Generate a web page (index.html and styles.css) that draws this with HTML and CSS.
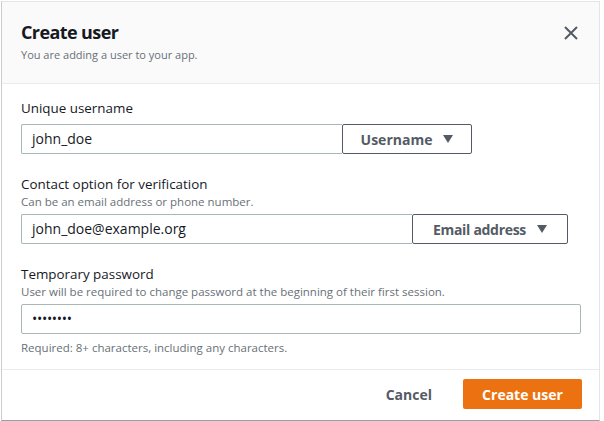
FILE: index.html
```html
<!DOCTYPE html>
<html>
<head>
<meta charset="utf-8">
<link rel="stylesheet" href="styles.css">
</head>
<body>
<div class="modal">
  <div class="header">
    <div class="header-text">
      <h1 class="title">Create user</h1>
      <p class="subtitle">You are adding a user to your app.</p>
    </div>
    <button class="close" aria-label="Close">
      <svg width="14" height="14" viewBox="0 0 14 14"><path d="M1 1 L13 13 M13 1 L1 13" stroke="#545b64" stroke-width="2" fill="none"/></svg>
    </button>
  </div>
  <div class="body">
    <div class="field">
      <label class="label">Unique username</label>
      <div class="row">
        <div class="input input-user">john_doe</div>
        <button class="select select-user">Username <span class="caret"></span></button>
      </div>
    </div>
    <div class="field">
      <label class="label">Contact option for verification</label>
      <div class="hint">Can be an email address or phone number.</div>
      <div class="row">
        <div class="input input-email">john_doe@example.org</div>
        <button class="select select-email">Email address <span class="caret"></span></button>
      </div>
    </div>
    <div class="field">
      <label class="label">Temporary password</label>
      <div class="hint">User will be required to change password at the beginning of their first session.</div>
      <div class="row">
        <div class="input input-pass">••••••••</div>
      </div>
      <div class="hint hint-after">Required: 8+ characters, including any characters.</div>
    </div>
  </div>
  <div class="footer">
    <button class="btn-link">Cancel</button>
    <button class="btn-primary">Create user</button>
  </div>
</div>
</body>
</html>
```
FILE: styles.css
```css
* { box-sizing: border-box; }
html, body { margin: 0; padding: 0; background: #ffffff; }
body {
  font-family: "Open Sans", "Liberation Sans", sans-serif;
  color: #16191f;
}
.modal {
  margin: 1px 0 0 1px;
  width: 599px;
  height: 420px;
  border: 1px solid #e3e6e6;
  border-left-color: #c9cdcd;
  border-bottom: 1px solid #9aa0a0;
  background: #fff;
  display: flex;
  flex-direction: column;
}
.header {
  height: 82px;
  background: #fafafa;
  border-bottom: 1px solid #e9ebed;
  padding: 18px 18px 0 19px;
  display: flex;
  justify-content: space-between;
  align-items: flex-start;
}
.title {
  margin: 0;
  font-size: 18px;
  line-height: 24px;
  font-weight: 700;
  color: #16191f;
  letter-spacing: -0.6px;
}
.subtitle {
  margin: 3px 0 0 0;
  font-size: 11px;
  line-height: 16px;
  color: #687078;
}
.close {
  border: none;
  background: none;
  padding: 0;
  margin: 6px 3px 0 0;
  width: 14px;
  height: 14px;
  display: flex;
}
.body {
  padding: 15px 18px 0 19px;
  display: flex;
  flex-direction: column;
  gap: 21px;
}
.field { display: flex; flex-direction: column; }
.label {
  font-size: 13.4px;
  line-height: 18px;
  color: #16191f;
}
.hint {
  font-size: 11.5px;
  line-height: 17px;
  color: #687078;
}
.hint-after { margin-top: 5px; }
.row {
  display: flex;
  margin-top: 4px;
}
.field:first-child .row { margin-top: 7px; }
.input {
  height: 30px;
  border: 1px solid #aab7b8;
  border-radius: 2px;
  padding: 0 10px;
  font-size: 14px;
  line-height: 28px;
  color: #16191f;
}
.input-user { width: 321px; border-right: none; border-radius: 2px 0 0 2px; }
.input-email { width: 391px; border-right: none; border-radius: 2px 0 0 2px; }
.input-pass { width: 560px; font-size: 14px; letter-spacing: -0.3px; }
.select {
  height: 30px;
  border: 1px solid #545b64;
  border-radius: 2px;
  background: #fff;
  font-family: inherit;
  font-weight: 700;
  font-size: 14px;
  color: #545b64;
  padding: 0 8px;
  display: flex;
  justify-content: center;
  align-items: center;
  gap: 11px;
  white-space: nowrap;
}
.select-user { width: 130px; }
.select-email { width: 156px; letter-spacing: -0.3px; }
.caret {
  width: 0;
  height: 0;
  border-left: 5px solid transparent;
  border-right: 5px solid transparent;
  border-top: 8px solid #545b64;
}
.footer {
  margin-top: auto;
  height: 51px;
  border-top: 1px solid #e9ebed;
  padding: 9px 17px 0 0;
  display: flex;
  justify-content: flex-end;
  align-items: flex-start;
  gap: 31px;
}
.btn-link {
  height: 30px;
  border: none;
  background: none;
  font-family: inherit;
  font-weight: 700;
  font-size: 14px;
  color: #545b64;
  padding: 0;
}
.btn-primary {
  height: 30px;
  width: 119px;
  border: none;
  border-radius: 2px;
  background: #ec7211;
  color: #fff;
  font-family: inherit;
  font-weight: 700;
  font-size: 14px;
  padding: 0;
}
```
